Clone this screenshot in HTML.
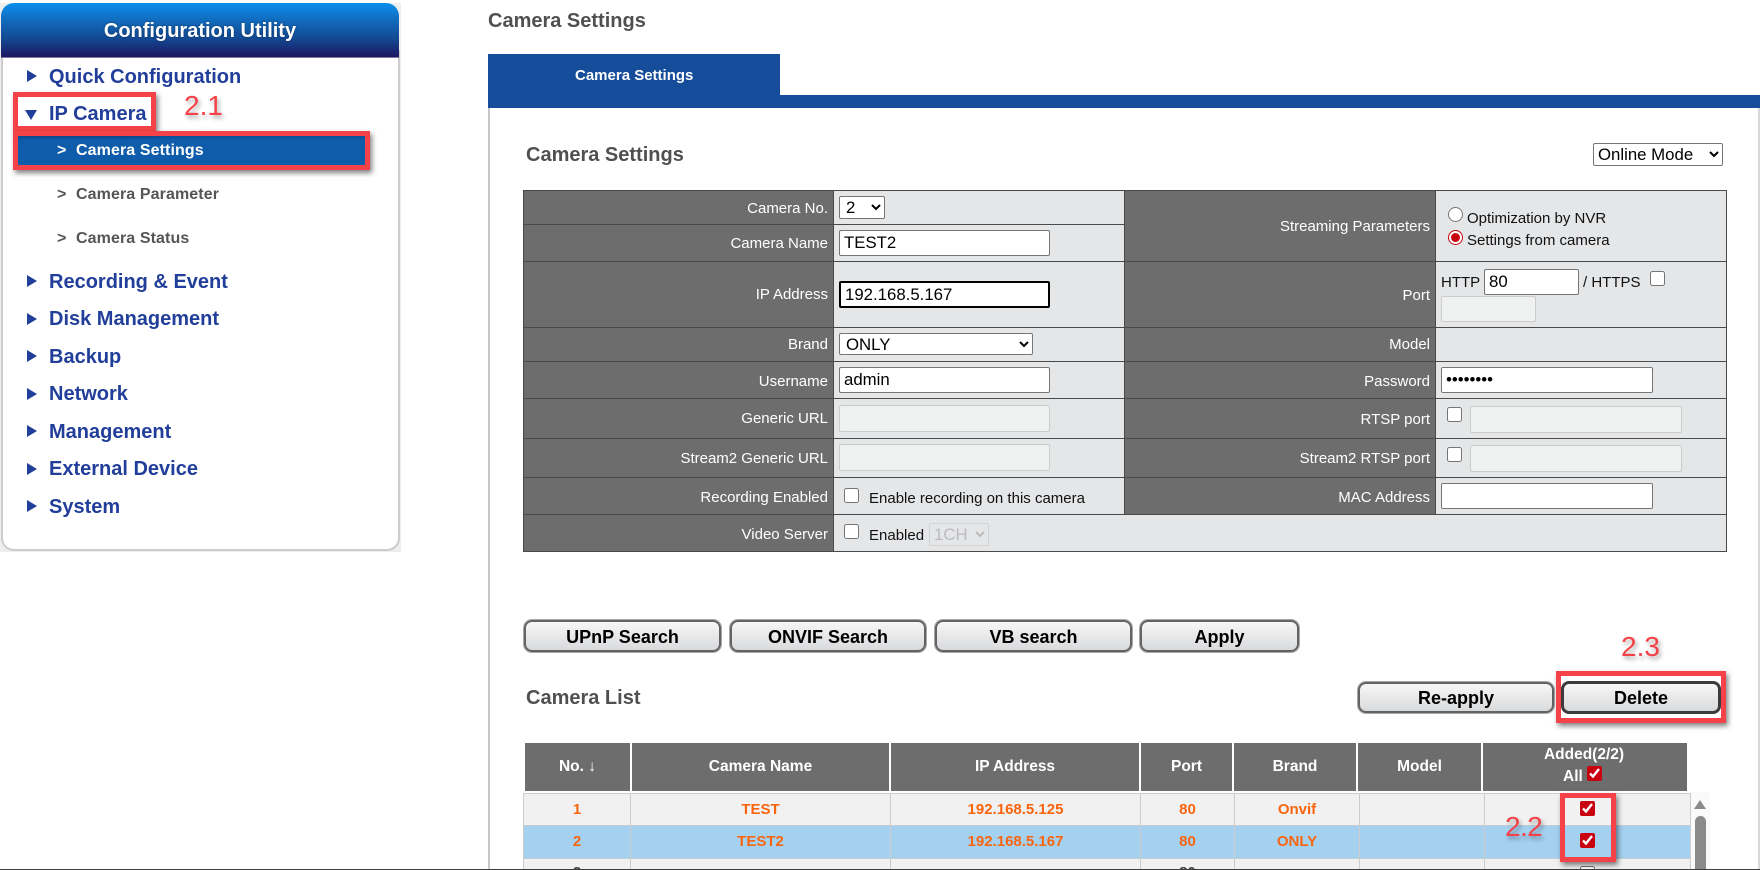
<!DOCTYPE html>
<html style="overflow:hidden;width:1760px;height:870px"><head><meta charset="utf-8"><title>Camera Settings</title>
<style>
html,body{margin:0;padding:0;background:#fff}
body{position:relative;width:1760px;height:870px;overflow:hidden;font-family:"Liberation Sans",Arial,sans-serif}
div,span,input,select,button{position:absolute;box-sizing:border-box}
#w{left:0;top:0;width:1760px;height:870px;overflow:hidden;background:#fff}
.m{left:49px;height:24px;line-height:24px;font-size:20px;font-weight:bold;color:#213f9a;white-space:nowrap;margin-top:1px}
.t{left:27px;width:0;height:0;margin-top:-1px;border-left:10px solid #213f9a;border-top:6.5px solid transparent;border-bottom:6.5px solid transparent}
.s{left:76px;height:20px;line-height:20px;font-size:16px;font-weight:bold;color:#555;white-space:nowrap;letter-spacing:.1px;margin-top:1px}
.g{left:57px;height:20px;line-height:20px;font-size:16px;font-weight:bold;color:#555;margin-top:1px}
.h{font-size:20px;font-weight:bold;color:#505050;height:26px;line-height:26px;white-space:nowrap;margin-top:1px}
.l{color:#fff;font-size:15px;height:20px;line-height:20px;text-align:right;white-space:nowrap}
.a{left:524px;width:304px}
.b{left:1125px;width:305px}
.x{font-size:15px;color:#111;height:20px;line-height:20px;white-space:nowrap}
.hl{height:1px;background:#4a4a4a}
input[type=text],input[type=password]{margin:0;border:1px solid #767676;border-radius:2px;background:#fff;font:16.8px "Liberation Sans",Arial,sans-serif;color:#000;padding:0 4px;outline:0}
input[disabled]{background:#eff0f0;border:1px solid #ccc}
select{margin:0;border:1px solid #767676;border-radius:2px;background:#fff;font:16.8px "Liberation Sans",Arial,sans-serif;color:#000;outline:0}
input[type=checkbox],input[type=radio]{margin:0;width:15px;height:15px;accent-color:#c8000f}
.btn{height:33px;border:2px solid #636363;border-radius:8px;background:linear-gradient(#f7f7f7,#d9dadc);font:bold 18px "Liberation Sans",Arial,sans-serif;color:#000;padding:2px 0 0;box-shadow:0 0 0 1px #a8a8a8}
.th{top:743px;height:48px;background:#6d6d6d;color:#fff;font-size:15.5px;font-weight:bold;text-align:center;line-height:47px;white-space:nowrap}
.c{height:20px;line-height:20px;color:#f9650f;font-size:15px;font-weight:bold;text-align:center;white-space:nowrap;margin-top:1px}
.v{top:793px;width:1px;height:76px;background:#ccc}
.red{border:5px solid #f44248;box-shadow:2px 3px 5px rgba(0,0,0,.5)}
.n{color:#f44248;font-size:28px;height:30px;line-height:30px;text-shadow:2px 3px 4px rgba(0,0,0,.35);white-space:nowrap}
</style></head>
<body>
<div id="w">
<!-- sidebar -->
<div style="left:0;top:3px;width:401px;height:549px;background:#eee"></div>
<div style="left:1px;top:50px;width:399px;height:501px;background:#fff;border:2px solid #ccc;border-top:0;border-radius:0 0 13px 13px"></div>
<div style="left:1px;top:3px;width:398px;height:55px;border-radius:13px 13px 0 0;background:linear-gradient(#0a8fee 0%,#1268b8 35%,#134a94 65%,#1e1660 100%);color:#fff;font-size:20px;font-weight:bold;text-align:center;line-height:56px;text-shadow:0 0 2px rgba(0,0,0,.4);border-bottom:1px solid #7a7a9a">Configuration Utility</div>

<div class="t" style="top:71px"></div><div class="m" style="top:64px">Quick Configuration</div>
<div style="left:25px;top:110px;width:0;height:0;border-top:10px solid #213f9a;border-left:6px solid transparent;border-right:6px solid transparent"></div>
<div class="m" style="top:101px">IP Camera</div>
<div style="left:18px;top:136px;width:347px;height:29px;background:linear-gradient(#0c4f96,#0f5cab 15%,#0f5cab)"></div>
<div class="g" style="top:140px;color:#fff">&gt;</div><div class="s" style="top:140px;color:#fff">Camera Settings</div>
<div class="g" style="top:184px">&gt;</div><div class="s" style="top:184px">Camera Parameter</div>
<div class="g" style="top:228px">&gt;</div><div class="s" style="top:228px">Camera Status</div>
<div class="t" style="top:276px"></div><div class="m" style="top:269px">Recording &amp; Event</div>
<div class="t" style="top:314px"></div><div class="m" style="top:306px">Disk Management</div>
<div class="t" style="top:351px"></div><div class="m" style="top:344px">Backup</div>
<div class="t" style="top:389px"></div><div class="m" style="top:381px">Network</div>
<div class="t" style="top:426px"></div><div class="m" style="top:419px">Management</div>
<div class="t" style="top:464px"></div><div class="m" style="top:456px">External Device</div>
<div class="t" style="top:501px"></div><div class="m" style="top:494px">System</div>

<div class="red" style="left:13px;top:92px;width:143px;height:39px"></div>
<div class="red" style="left:13px;top:131px;width:357px;height:39px"></div>
<div class="n" style="left:184px;top:91px">2.1</div>

<!-- main panel -->
<div class="h" style="left:488px;top:7px">Camera Settings</div>
<div style="left:488px;top:54px;width:292px;height:54px;background:#154d9b;color:#fff;font-size:15px;font-weight:bold;line-height:44px;padding-left:87px">Camera Settings</div>
<div style="left:488px;top:95px;width:1272px;height:13px;background:#154d9b"></div>
<div style="left:488px;top:108px;width:2px;height:762px;background:#c8c8c8"></div>
<div style="left:1758px;top:108px;width:2px;height:762px;background:#d8d8d8"></div>
<div class="h" style="left:526px;top:141px">Camera Settings</div>
<select style="left:1593px;top:143px;width:130px;height:23px;padding-bottom:1px"><option>Online Mode</option></select>

<!-- settings table -->
<div style="left:523px;top:190px;width:1204px;height:362px;background:#e5e6e8;border:1px solid #4a4a4a"></div>
<div style="left:524px;top:191px;width:309px;height:360px;background:#6d6d6d"></div>
<div style="left:1125px;top:191px;width:310px;height:323px;background:#6d6d6d"></div>
<div style="left:833px;top:190px;width:1px;height:362px;background:#4a4a4a"></div>
<div style="left:1124px;top:190px;width:1px;height:324px;background:#4a4a4a"></div>
<div style="left:1435px;top:190px;width:1px;height:324px;background:#4a4a4a"></div>
<div class="hl" style="left:524px;top:224px;width:600px"></div>
<div class="hl" style="left:524px;top:261px;width:1203px"></div>
<div class="hl" style="left:524px;top:327px;width:1203px"></div>
<div class="hl" style="left:524px;top:361px;width:1203px"></div>
<div class="hl" style="left:524px;top:398px;width:1203px"></div>
<div class="hl" style="left:524px;top:438px;width:1203px"></div>
<div class="hl" style="left:524px;top:477px;width:1203px"></div>
<div class="hl" style="left:524px;top:514px;width:1203px"></div>

<div class="l a" style="top:199px">Camera No.</div>
<div class="l a" style="top:234px">Camera Name</div>
<div class="l a" style="top:285px">IP Address</div>
<div class="l a" style="top:335px">Brand</div>
<div class="l a" style="top:372px">Username</div>
<div class="l a" style="top:409px">Generic URL</div>
<div class="l a" style="top:449px">Stream2 Generic URL</div>
<div class="l a" style="top:488px">Recording Enabled</div>
<div class="l a" style="top:525px">Video Server</div>
<div class="l b" style="top:217px">Streaming Parameters</div>
<div class="l b" style="top:286px">Port</div>
<div class="l b" style="top:335px">Model</div>
<div class="l b" style="top:372px">Password</div>
<div class="l b" style="top:410px">RTSP port</div>
<div class="l b" style="top:449px">Stream2 RTSP port</div>
<div class="l b" style="top:488px">MAC Address</div>

<select style="left:839px;top:196px;width:46px;height:23px;padding-left:2px"><option>2</option></select>
<input type="text" value="TEST2" style="left:839px;top:230px;width:211px;height:26px">
<input type="text" value="192.168.5.167" style="left:839px;top:281px;width:211px;height:27px;border:2px solid #000;padding-left:4px">
<select style="left:839px;top:333px;width:194px;height:22px;padding-left:2px"><option>ONLY</option></select>
<input type="text" value="admin" style="left:839px;top:367px;width:211px;height:26px">
<input type="text" disabled style="left:839px;top:405px;width:211px;height:27px">
<input type="text" disabled style="left:839px;top:444px;width:211px;height:27px">
<input type="checkbox" style="left:844px;top:488px">
<div class="x" style="left:869px;top:489px">Enable recording on this camera</div>
<input type="checkbox" style="left:844px;top:524px">
<div class="x" style="left:869px;top:526px">Enabled</div>
<select disabled style="left:929px;top:523px;width:60px;height:23px;border-color:#ccc;background:#e5e6e8;color:#aaa"><option>1CH</option></select>

<input type="radio" name="r" style="left:1448px;top:207px">
<div class="x" style="left:1467px;top:209px">Optimization by NVR</div>
<input type="radio" name="r" checked style="left:1448px;top:230px">
<div class="x" style="left:1467px;top:231px">Settings from camera</div>
<div class="x" style="left:1441px;top:273px">HTTP</div>
<input type="text" value="80" style="left:1484px;top:269px;width:95px;height:26px">
<div class="x" style="left:1583px;top:273px">/ HTTPS</div>
<input type="checkbox" style="left:1650px;top:271px">
<input type="text" disabled style="left:1441px;top:296px;width:95px;height:26px">
<input type="password" value="12345678" style="left:1441px;top:367px;width:212px;height:26px;font-size:16.8px">
<input type="checkbox" style="left:1447px;top:407px">
<input type="text" disabled style="left:1470px;top:406px;width:212px;height:27px">
<input type="checkbox" style="left:1447px;top:447px">
<input type="text" disabled style="left:1470px;top:445px;width:212px;height:27px">
<input type="text" style="left:1441px;top:483px;width:212px;height:26px">

<!-- buttons -->
<button class="btn" style="left:524px;top:620px;width:197px;height:32px">UPnP Search</button>
<button class="btn" style="left:730px;top:620px;width:196px;height:32px">ONVIF Search</button>
<button class="btn" style="left:935px;top:620px;width:197px;height:32px">VB search</button>
<button class="btn" style="left:1140px;top:620px;width:159px;height:32px">Apply</button>
<div class="h" style="left:526px;top:684px">Camera List</div>
<button class="btn" style="left:1358px;top:682px;width:196px;height:31px">Re-apply</button>
<button class="btn" style="left:1561px;top:681px;width:160px;border:3px solid #3c3c3c;padding-top:1px;box-shadow:none">Delete</button>
<div class="red" style="left:1556px;top:671px;width:170px;height:52px"></div>
<div class="n" style="left:1621px;top:632px">2.3</div>

<!-- list header -->
<div class="th" style="left:525px;width:105px">No. ↓</div>
<div class="th" style="left:632px;width:257px">Camera Name</div>
<div class="th" style="left:891px;width:248px">IP Address</div>
<div class="th" style="left:1141px;width:91px">Port</div>
<div class="th" style="left:1234px;width:122px">Brand</div>
<div class="th" style="left:1358px;width:123px">Model</div>
<div class="th" style="left:1483px;width:204px"></div>
<div class="l" style="left:1483px;width:202px;top:745px;text-align:center;font-weight:bold;font-size:15.5px">Added(2/2)</div>
<div class="l" style="left:1563px;top:767px;font-weight:bold;font-size:15.5px">All</div>
<input type="checkbox" checked style="left:1587px;top:766px">

<!-- list rows -->
<div style="left:523px;top:793px;width:1168px;height:77px;background:#f1f1f1;border:1px solid #ccc;border-bottom:0"></div>
<div style="left:524px;top:825px;width:1166px;height:34px;background:#a5d1f1;border-top:1px solid #c4ccd2;border-bottom:1px solid #c4ccd2"></div>
<div class="v" style="left:630px"></div><div class="v" style="left:890px"></div><div class="v" style="left:1140px"></div><div class="v" style="left:1234px"></div><div class="v" style="left:1359px"></div><div class="v" style="left:1484px"></div>
<div style="left:1691px;top:792px;width:19px;height:78px;background:#fafafa"></div>
<div style="left:1694px;top:800px;width:0;height:0;border-bottom:9px solid #8a8a8a;border-left:6.5px solid transparent;border-right:6.5px solid transparent"></div>
<div style="left:1695px;top:816px;width:11px;height:54px;background:#8a8a8a;border-radius:6px 6px 0 0"></div>

<div class="c" style="left:524px;width:106px;top:799px">1</div>
<div class="c" style="left:631px;width:259px;top:799px">TEST</div>
<div class="c" style="left:891px;width:249px;top:799px">192.168.5.125</div>
<div class="c" style="left:1141px;width:93px;top:799px">80</div>
<div class="c" style="left:1235px;width:124px;top:799px">Onvif</div>
<input type="checkbox" checked style="left:1580px;top:801px">
<div class="c" style="left:524px;width:106px;top:831px">2</div>
<div class="c" style="left:631px;width:259px;top:831px">TEST2</div>
<div class="c" style="left:891px;width:249px;top:831px">192.168.5.167</div>
<div class="c" style="left:1141px;width:93px;top:831px">80</div>
<div class="c" style="left:1235px;width:124px;top:831px">ONLY</div>
<input type="checkbox" checked style="left:1580px;top:833px">
<div class="c" style="left:524px;width:106px;top:862px;color:#444">3</div>
<div class="c" style="left:1141px;width:93px;top:862px;color:#444">80</div>
<input type="checkbox" style="left:1580px;top:866px">

<div class="red" style="left:1560px;top:793px;width:56px;height:69px"></div>
<div class="n" style="left:1505px;top:812px;letter-spacing:-.6px">2.2</div>

<div style="left:0;top:869px;width:1760px;height:1px;background:#3f3f3f"></div>
</div>
</body></html>
